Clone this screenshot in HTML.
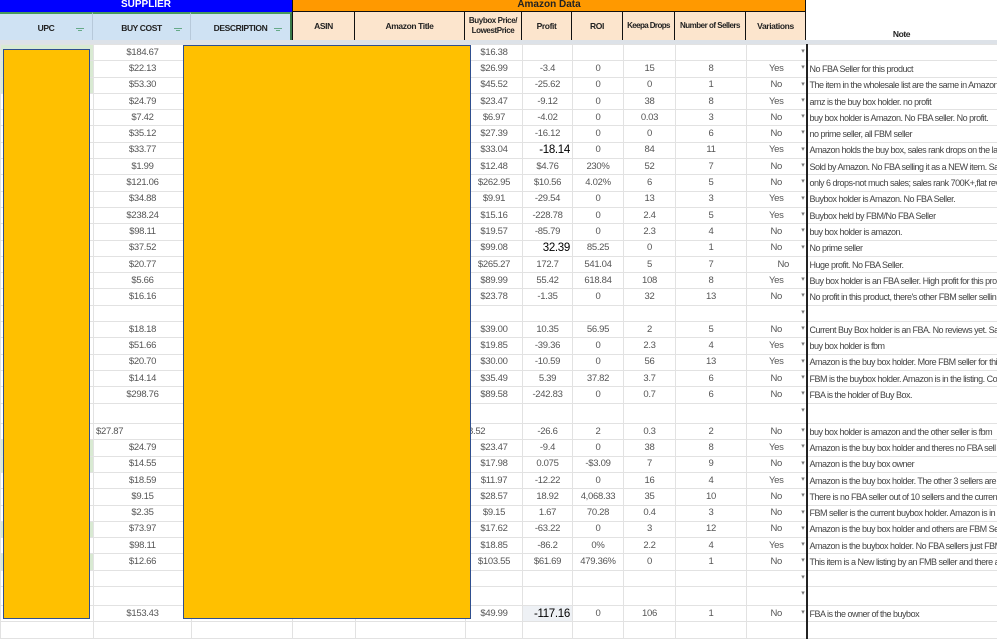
<!DOCTYPE html>
<html><head><meta charset="utf-8"><style>
*{margin:0;padding:0;box-sizing:border-box}
body{width:997px;height:629px;overflow:hidden;background:#fff;font-family:"Liberation Sans",sans-serif;position:relative}
.ban{position:absolute;top:0;height:12px;font-size:10px;font-weight:bold;text-align:center;line-height:10px}
.hd{position:absolute;top:12px;height:29px;font-size:8.5px;letter-spacing:-0.4px;font-weight:bold;color:#222;display:flex;align-items:center;justify-content:center;text-align:center;line-height:10px;white-space:nowrap}
.sup{background:#cfe2f3;border-right:1px solid #b7c9da;border-top:2px solid #4a9a5a}
.amz{background:#fce5cd;border:1px solid #111;border-left:none;top:11px;height:30px}
.flt{position:absolute;right:8px;top:14px;width:8px;height:1px;background:#6a8;}
.flt:after{content:"";position:absolute;left:2px;top:2px;width:4px;height:1px;background:#6a8}
table{position:absolute;top:44px;left:0;border-collapse:collapse;table-layout:fixed;width:997px}
td{border:1px solid #e2e2e2;font-size:9.5px;letter-spacing:-0.3px;color:#555;text-align:center;white-space:nowrap;overflow:hidden;padding:0 2px;line-height:10px}
td.n{text-align:left;border-left:2px solid #222;color:#444;font-size:9px;letter-spacing:-0.5px}
td.v{position:relative}
td.v.a:after{content:"▾";position:absolute;right:1px;top:2px;font-size:7px;color:#777}
td.k{color:#000;font-size:11.5px;text-align:right}
.y{position:absolute;background:#ffc000;border:1px solid #2f4f8f}
</style></head><body>
<div style="position:absolute;top:0;left:0;width:997px;height:44px;background:#fff"></div>
<div class="ban" style="left:0;width:292px;background:#0000ff;color:#fff">SUPPLIER</div>
<div class="ban" style="left:292px;width:514px;background:#ff9900;color:#222;border:1px solid #111;border-top:none">Amazon Data</div>
<div class="hd sup" style="left:0;width:93px">UPC<span class="flt"></span></div>
<div class="hd sup" style="left:93px;width:98px">BUY COST<span class="flt"></span></div>
<div class="hd sup" style="left:191px;width:101px;border-right:2px solid #3a7a4a">DESCRIPTION<span class="flt"></span></div>
<div class="hd amz" style="left:292px;width:63px;border-left:1px solid #111">ASIN</div>
<div class="hd amz" style="left:355px;width:110px">Amazon Title</div>
<div class="hd amz" style="left:465px;width:57px;font-size:8px">Buybox Price/<br>LowestPrice</div>
<div class="hd amz" style="left:522px;width:50px">Profit</div>
<div class="hd amz" style="left:572px;width:51px">ROI</div>
<div class="hd amz" style="left:623px;width:52px;font-size:8px;letter-spacing:-0.6px">Keepa Drops</div>
<div class="hd amz" style="left:675px;width:71px;font-size:8px;letter-spacing:-0.5px">Number of Sellers</div>
<div class="hd amz" style="left:746px;width:60px">Variations</div>
<div class="hd" style="left:806px;width:191px;top:14px;height:36px;padding-top:4px">Note</div>
<div style="position:absolute;top:40px;left:0;width:997px;height:4px;background:#dde2e8"></div>
<table>
<colgroup><col style="width:93px"><col style="width:98px"><col style="width:101px"><col style="width:63px"><col style="width:110px"><col style="width:57px"><col style="width:50px"><col style="width:51px"><col style="width:52px"><col style="width:71px"><col style="width:60px"><col style="width:191px"></colgroup>
<tr style="height:16.3px"><td style="background:#d9ead3"></td><td>$184.67</td><td></td><td></td><td></td><td>$16.38</td><td></td><td></td><td></td><td></td><td class="v a"></td><td class="n"></td></tr>
<tr style="height:16.3px"><td style="background:#d9ead3"></td><td>$22.13</td><td></td><td></td><td></td><td>$26.99</td><td>-3.4</td><td>0</td><td>15</td><td>8</td><td class="v a">Yes</td><td class="n">No FBA Seller for this product</td></tr>
<tr style="height:16.3px"><td style="background:#d9ead3"></td><td>$53.30</td><td></td><td></td><td></td><td>$45.52</td><td>-25.62</td><td>0</td><td>0</td><td>1</td><td class="v a">No</td><td class="n">The item in the wholesale list are the same in Amazon</td></tr>
<tr style="height:16.3px"><td></td><td>$24.79</td><td></td><td></td><td></td><td>$23.47</td><td>-9.12</td><td>0</td><td>38</td><td>8</td><td class="v a">Yes</td><td class="n">amz is the buy box holder. no profit</td></tr>
<tr style="height:16.3px"><td></td><td>$7.42</td><td></td><td></td><td></td><td>$6.97</td><td>-4.02</td><td>0</td><td>0.03</td><td>3</td><td class="v a">No</td><td class="n">buy box holder is Amazon. No FBA seller. No profit.</td></tr>
<tr style="height:16.3px"><td></td><td>$35.12</td><td></td><td></td><td></td><td>$27.39</td><td>-16.12</td><td>0</td><td>0</td><td>6</td><td class="v a">No</td><td class="n">no prime seller, all FBM seller</td></tr>
<tr style="height:16.3px"><td></td><td>$33.77</td><td></td><td></td><td></td><td>$33.04</td><td class="k">-18.14</td><td>0</td><td>84</td><td>11</td><td class="v a">Yes</td><td class="n">Amazon holds the buy box, sales rank drops on the last</td></tr>
<tr style="height:16.3px"><td></td><td>$1.99</td><td></td><td></td><td></td><td>$12.48</td><td>$4.76</td><td>230%</td><td>52</td><td>7</td><td class="v a">No</td><td class="n">Sold by Amazon. No FBA selling it as a NEW item. Sa</td></tr>
<tr style="height:16.3px"><td></td><td>$121.06</td><td></td><td></td><td></td><td>$262.95</td><td>$10.56</td><td>4.02%</td><td>6</td><td>5</td><td class="v a">No</td><td class="n">only 6 drops-not much sales; sales rank 700K+,flat rev</td></tr>
<tr style="height:16.3px"><td></td><td>$34.88</td><td></td><td></td><td></td><td>$9.91</td><td>-29.54</td><td>0</td><td>13</td><td>3</td><td class="v a">Yes</td><td class="n">Buybox holder is Amazon. No FBA Seller.</td></tr>
<tr style="height:16.3px"><td></td><td>$238.24</td><td></td><td></td><td></td><td>$15.16</td><td>-228.78</td><td>0</td><td>2.4</td><td>5</td><td class="v a">Yes</td><td class="n">Buybox held by FBM/No FBA Seller</td></tr>
<tr style="height:16.3px"><td></td><td>$98.11</td><td></td><td></td><td></td><td>$19.57</td><td>-85.79</td><td>0</td><td>2.3</td><td>4</td><td class="v a">No</td><td class="n">buy box holder is amazon.</td></tr>
<tr style="height:16.3px"><td></td><td>$37.52</td><td></td><td></td><td></td><td>$99.08</td><td class="k">32.39</td><td>85.25</td><td>0</td><td>1</td><td class="v a">No</td><td class="n">No prime seller</td></tr>
<tr style="height:16.3px"><td></td><td>$20.77</td><td></td><td></td><td></td><td>$265.27</td><td>172.7</td><td>541.04</td><td>5</td><td>7</td><td class="v" style="padding-left:16px">No</td><td class="n">Huge profit. No FBA Seller.</td></tr>
<tr style="height:16.3px"><td></td><td>$5.66</td><td></td><td></td><td></td><td>$89.99</td><td>55.42</td><td>618.84</td><td>108</td><td>8</td><td class="v a">Yes</td><td class="n">Buy box holder is an FBA seller. High profit for this pro</td></tr>
<tr style="height:16.3px"><td></td><td>$16.16</td><td></td><td></td><td></td><td>$23.78</td><td>-1.35</td><td>0</td><td>32</td><td>13</td><td class="v a">No</td><td class="n">No profit in this product, there's other FBM seller sellin</td></tr>
<tr style="height:16.3px"><td></td><td></td><td></td><td></td><td></td><td></td><td></td><td></td><td></td><td></td><td class="v a"></td><td class="n"></td></tr>
<tr style="height:16.3px"><td></td><td>$18.18</td><td></td><td></td><td></td><td>$39.00</td><td>10.35</td><td>56.95</td><td>2</td><td>5</td><td class="v a">No</td><td class="n">Current Buy Box holder is an FBA. No reviews yet. Sa</td></tr>
<tr style="height:16.3px"><td></td><td>$51.66</td><td></td><td></td><td></td><td>$19.85</td><td>-39.36</td><td>0</td><td>2.3</td><td>4</td><td class="v a">Yes</td><td class="n">buy box holder is fbm</td></tr>
<tr style="height:16.3px"><td></td><td>$20.70</td><td></td><td></td><td></td><td>$30.00</td><td>-10.59</td><td>0</td><td>56</td><td>13</td><td class="v a">Yes</td><td class="n">Amazon is the buy box holder. More FBM seller for this</td></tr>
<tr style="height:16.3px"><td></td><td>$14.14</td><td></td><td></td><td></td><td>$35.49</td><td>5.39</td><td>37.82</td><td>3.7</td><td>6</td><td class="v a">No</td><td class="n">FBM is the buybox holder. Amazon is in the listing. Co</td></tr>
<tr style="height:16.3px"><td></td><td>$298.76</td><td></td><td></td><td></td><td>$89.58</td><td>-242.83</td><td>0</td><td>0.7</td><td>6</td><td class="v a">No</td><td class="n">FBA is the holder of Buy Box.</td></tr>
<tr style="height:20.5px"><td></td><td></td><td></td><td></td><td></td><td></td><td></td><td></td><td></td><td></td><td class="v a"></td><td class="n"></td></tr>
<tr style="height:16.3px"><td></td><td style="text-align:left">$27.87</td><td></td><td></td><td></td><td style="text-align:left">8.52</td><td>-26.6</td><td>2</td><td>0.3</td><td>2</td><td class="v a">No</td><td class="n">buy box holder is amazon and the other seller is fbm</td></tr>
<tr style="height:16.3px"><td style="background:#d9ead3"></td><td>$24.79</td><td></td><td></td><td></td><td>$23.47</td><td>-9.4</td><td>0</td><td>38</td><td>8</td><td class="v a">Yes</td><td class="n">Amazon is the buy box holder  and theres no FBA sell</td></tr>
<tr style="height:16.3px"><td style="background:#d9ead3"></td><td>$14.55</td><td></td><td></td><td></td><td>$17.98</td><td>0.075</td><td>-$3.09</td><td>7</td><td>9</td><td class="v a">No</td><td class="n">Amazon is the buy box owner</td></tr>
<tr style="height:16.3px"><td></td><td>$18.59</td><td></td><td></td><td></td><td>$11.97</td><td>-12.22</td><td>0</td><td>16</td><td>4</td><td class="v a">Yes</td><td class="n">Amazon is the buy box holder. The other 3 sellers are</td></tr>
<tr style="height:16.3px"><td></td><td>$9.15</td><td></td><td></td><td></td><td>$28.57</td><td>18.92</td><td>4,068.33</td><td>35</td><td>10</td><td class="v a">No</td><td class="n">There is no FBA seller out of 10 sellers and the curren</td></tr>
<tr style="height:16.3px"><td></td><td>$2.35</td><td></td><td></td><td></td><td>$9.15</td><td>1.67</td><td>70.28</td><td>0.4</td><td>3</td><td class="v a">No</td><td class="n">FBM seller is the current buybox holder. Amazon is in</td></tr>
<tr style="height:16.3px"><td style="background:#d9ead3"></td><td>$73.97</td><td></td><td></td><td></td><td>$17.62</td><td>-63.22</td><td>0</td><td>3</td><td>12</td><td class="v a">No</td><td class="n">Amazon is the buy box holder and others are FBM Sel</td></tr>
<tr style="height:16.3px"><td></td><td>$98.11</td><td></td><td></td><td></td><td>$18.85</td><td>-86.2</td><td>0%</td><td>2.2</td><td>4</td><td class="v a">Yes</td><td class="n">Amazon is the buybox holder. No FBA sellers just FBM</td></tr>
<tr style="height:16.3px"><td style="background:#d9ead3"></td><td>$12.66</td><td></td><td></td><td></td><td>$103.55</td><td>$61.69</td><td>479.36%</td><td>0</td><td>1</td><td class="v a">No</td><td class="n">This item is a New listing by an FMB seller and there a</td></tr>
<tr style="height:16.3px"><td></td><td></td><td></td><td></td><td></td><td></td><td></td><td></td><td></td><td></td><td class="v a"></td><td class="n"></td></tr>
<tr style="height:19px"><td></td><td></td><td></td><td></td><td></td><td></td><td></td><td></td><td></td><td></td><td class="v a"></td><td class="n"></td></tr>
<tr style="height:16.3px"><td></td><td>$153.43</td><td></td><td></td><td></td><td>$49.99</td><td class="k" style="background:#eef1f5">-117.16</td><td>0</td><td>106</td><td>1</td><td class="v a">No</td><td class="n">FBA is the owner of the buybox</td></tr>
<tr style="height:16.3px"><td></td><td></td><td></td><td></td><td></td><td></td><td></td><td></td><td></td><td></td><td class="v"></td><td class="n"></td></tr>
</table>
<div class="y" style="left:3px;top:49px;width:87px;height:570px"></div>
<div class="y" style="left:183px;top:45px;width:288px;height:574px"></div>
</body></html>
